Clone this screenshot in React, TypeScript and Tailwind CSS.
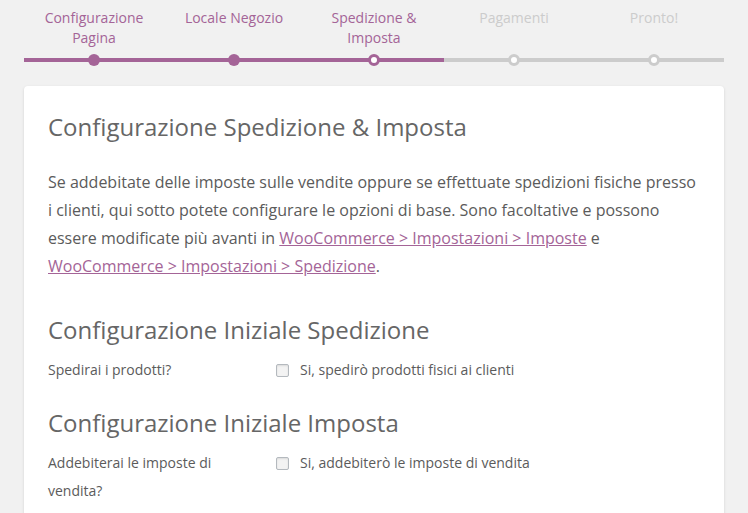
import React from "react";

const steps = [
  { label: ["Configurazione", "Pagina"], state: "done" },
  { label: ["Locale Negozio"], state: "done" },
  { label: ["Spedizione &", "Imposta"], state: "active" },
  { label: ["Pagamenti"], state: "todo" },
  { label: ["Pronto!"], state: "todo" },
];

function Checkbox() {
  return (
    <span className="mt-[8px] block h-[13px] w-[13px] shrink-0 rounded-[2px] border border-[#b4b9be] bg-[#f3f3f3] shadow-[inset_0_1px_2px_rgba(0,0,0,0.1)]" />
  );
}

export default function App() {
  return (
    <div
      className="min-h-[513px] bg-[#f1f1f1] px-[24px] pt-[8px]"
      style={{ fontFamily: '"Open Sans", "Liberation Sans", sans-serif' }}
    >
      <ol className="flex">
        {steps.map((s, i) => {
          const done = s.state !== "todo";
          const lineDone = i <= 2;
          return (
            <li key={i} className="flex flex-1 flex-col items-center">
              <div
                className={`h-[44px] text-center text-[14px] leading-[20px] ${
                  done ? "text-[#a46497]" : "text-[#cccccc]"
                }`}
              >
                {s.label.map((l, j) => (
                  <div key={j}>{l}</div>
                ))}
              </div>
              <div className={`relative mt-[6px] h-[4px] w-full ${lineDone ? "bg-[#a46497]" : "bg-[#cccccc]"}`}>
                {s.state === "done" && (
                  <span className="absolute left-1/2 top-1/2 h-[12px] w-[12px] -translate-x-1/2 -translate-y-1/2 rounded-full bg-[#a46497]" />
                )}
                {s.state === "active" && (
                  <span className="absolute left-1/2 top-1/2 h-[12px] w-[12px] -translate-x-1/2 -translate-y-1/2 rounded-full border-[3px] border-[#a46497] bg-white" />
                )}
                {s.state === "todo" && (
                  <span className="absolute left-1/2 top-1/2 h-[12px] w-[12px] -translate-x-1/2 -translate-y-1/2 rounded-full border-[3px] border-[#cccccc] bg-white" />
                )}
              </div>
            </li>
          );
        })}
      </ol>

      <div className="mt-[24px] rounded-[4px] bg-white px-[24px] pb-[24px] pt-[23px] text-[#5b5b5b] shadow-[0_1px_3px_rgba(0,0,0,0.13)]">
        <h1 className="text-[24px] leading-[36px] text-[#666]">Configurazione Spedizione &amp; Imposta</h1>
        <p className="mt-[23px] text-[16px] leading-[28px]">
          Se addebitate delle imposte sulle vendite oppure se effettuate spedizioni fisiche presso i clienti, qui sotto
          potete configurare le opzioni di base. Sono facoltative e possono essere modificate più avanti in{" "}
          <a className="text-[#a46497] underline">WooCommerce &gt; Impostazioni &gt; Imposte</a> e{" "}
          <a className="text-[#a46497] underline">WooCommerce &gt; Impostazioni &gt; Spedizione</a>.
        </p>

        <h2 className="mt-[32px] text-[24px] leading-[36px] text-[#666]">Configurazione Iniziale Spedizione</h2>
        <div className="mt-[8px] flex text-[14px] leading-[28px]">
          <div className="w-[228px] shrink-0">Spedirai i prodotti?</div>
          <div className="flex gap-[11px]">
            <Checkbox />
            <span>Si, spedirò prodotti fisici ai clienti</span>
          </div>
        </div>

        <h2 className="mt-[21px] text-[24px] leading-[36px] text-[#666]">Configurazione Iniziale Imposta</h2>
        <div className="mt-[8px] flex text-[14px] leading-[28px]">
          <div className="w-[228px] shrink-0 pr-[40px]">Addebiterai le imposte di vendita?</div>
          <div className="flex gap-[11px]">
            <Checkbox />
            <span>Si, addebiterò le imposte di vendita</span>
          </div>
        </div>
      </div>
    </div>
  );
}
